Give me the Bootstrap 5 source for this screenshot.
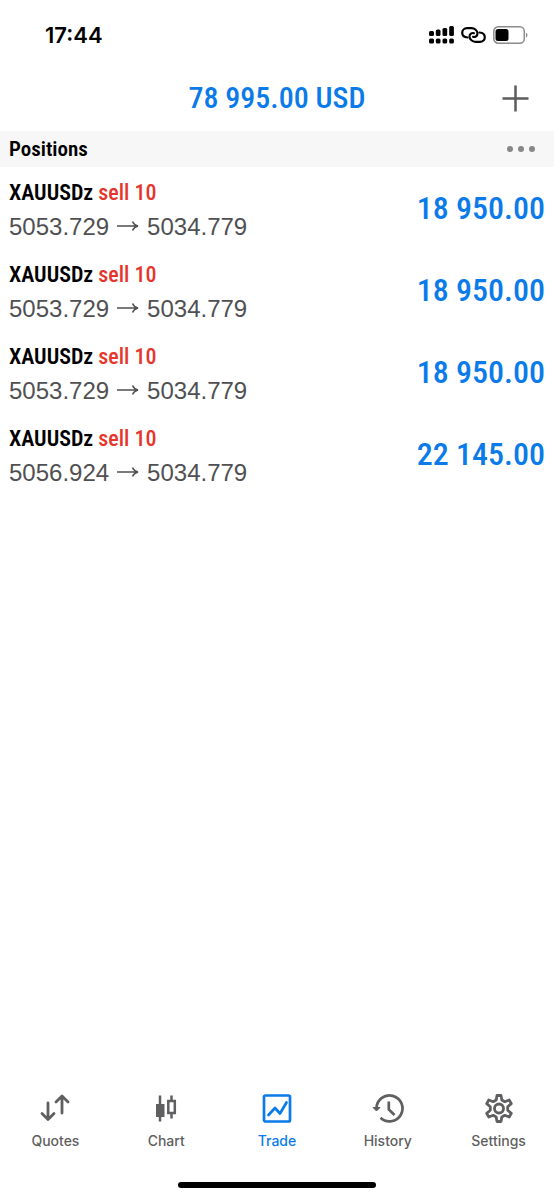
<!DOCTYPE html>
<html lang="en">
<head>
<meta charset="utf-8">
<meta name="viewport" content="width=device-width, initial-scale=1">
<title>Trade</title>
<link href="https://cdn.jsdelivr.net/npm/bootstrap@5.3.0/dist/css/bootstrap.min.css" rel="stylesheet">
<style>
  :root { --accent: #0b7bea; --ink-soft: #5f5f61; }
  body { font-family: "Liberation Sans", Arial, sans-serif; background: #fff; color: #000; }
  svg { display: block; }
  .condensed { font-family: "Roboto Condensed", "Liberation Sans Narrow", sans-serif; font-weight: 500; }
  .status-bar { height: 65px; padding: 5px 25px 0 45px; }
  .status-icons { gap: 7px; }
  .clock { font: 600 22px/28px Inter, sans-serif; }
  .account-bar { height: 66px; }
  .balance { font-size: 30px; line-height: 40px; color: var(--accent); }
  .plain-btn { background: none; border: 0; padding: 0; color: #5c5c5e; }
  .add-btn { right: 25px; }
  .section-bar { height: 36px; padding: 0 18px 0 9px; background: #f7f7f7; }
  .section-title { font-size: 21px; line-height: 28px; font-weight: 600; }
  .position-row { padding: 8px 9px 6px; }
  .symbol { font-size: 22px; line-height: 36px; font-weight: 600; }
  .sell { color: #e6352b; font-weight: 500; }
  .prices { font-size: 24px; line-height: 32px; color: #505053; }
  .profit { font-size: 32px; line-height: 40px; padding-bottom: 2px; color: var(--accent); }
  .tab-link { color: var(--ink-soft); font: 500 14px/20px Inter, sans-serif; }
  .tab-link.active { color: var(--accent); }
  .home-bar { width: 198px; height: 6px; margin: 31px auto 12px; background: #000; }
</style>
</head>
<body>
<div class="d-flex flex-column min-vh-100">
  <header>
    <div class="status-bar d-flex align-items-center justify-content-between">
      <time class="clock">17:44</time>
      <div class="status-icons d-flex align-items-center">
        <svg width="25" height="18" viewBox="0 0 25 18" role="img" aria-label="Signal">
          <rect x="0" y="5" width="5" height="5" rx="1.5"/><rect x="6.800" y="3.500" width="4.700" height="6.500" rx="1.500"/><rect x="13.500" y="2" width="4.700" height="8" rx="1.500"/><rect x="20.200" y="0" width="4.700" height="10" rx="1.500"/>
          <rect x="0" y="12.500" width="5" height="5" rx="1.500"/><rect x="6.800" y="12.500" width="4.700" height="5" rx="1.500"/><rect x="13.500" y="12.500" width="4.700" height="5" rx="1.500"/><rect x="20.200" y="12.500" width="4.700" height="5" rx="1.500"/>
        </svg>
        <svg width="25" height="16" viewBox="0 0 25 16" fill="none" stroke="#000" stroke-width="2.200" stroke-linecap="round" role="img" aria-label="Linked">
          <path d="M6.500 10.500C3 10.200 1.200 8 1.200 5.700C1.200 3 3.300 1.200 6 1.200H10.500C13.500 1.200 16.500 3.500 16.500 6.500C16.500 9 14 10.500 12 9.800"/>
          <path d="M18.500 5.500C22 5.800 23.800 8 23.800 10.300C23.800 13 21.700 14.800 19 14.800H14.500C11.500 14.800 8.500 12.500 8.500 9.500C8.500 7 11 5.500 13 6.200"/>
        </svg>
        <svg width="36" height="18" viewBox="0 0 36 18" role="img" aria-label="Battery">
          <rect x=".8" y=".8" width="30.500" height="16.400" rx="4.500" fill="none" stroke="#8b8b8b" stroke-width="1.500"/>
          <rect x="2.500" y="3" width="13" height="12" rx="2.500"/>
          <path d="M33 6.500 Q34.500 7 34.500 9 T33 11.500Z" fill="#8b8b8b"/>
        </svg>
      </div>
    </div>
    <div class="account-bar position-relative d-flex align-items-center justify-content-center">
      <h1 class="balance condensed m-0">78 995.00 USD</h1>
      <button type="button" class="plain-btn add-btn position-absolute" aria-label="New order">
        <svg width="27" height="27" viewBox="0 0 27 27" stroke="currentColor" stroke-width="2.500"><path d="M0.500 13.500H26.500M13.500 0.500V26.500"/></svg>
      </button>
    </div>
  </header>

  <main class="flex-grow-1">
    <div class="section-bar d-flex align-items-center justify-content-between">
      <h2 class="section-title condensed m-0">Positions</h2>
      <button type="button" class="plain-btn" aria-label="More">
        <svg width="30" height="8" viewBox="0 0 30 8" fill="#87878a"><circle cx="4" cy="4" r="3"/><circle cx="15" cy="4" r="3"/><circle cx="26" cy="4" r="3"/></svg>
      </button>
    </div>
    <ul class="list-unstyled m-0">
      <li class="position-row d-flex align-items-center justify-content-between">
        <div><div class="symbol condensed">XAUUSDz <span class="sell">sell 10</span></div>
          <div class="prices d-flex align-items-center gap-2"><span>5053.729</span><svg width="22" height="12" viewBox="0 0 22 12" fill="none" stroke="currentColor" stroke-width="1.500" aria-label="to"><path d="M0 5H21M15.500 0.500Q17 4 21 5Q17 6 15.500 9.500"/></svg><span>5034.779</span></div></div>
        <div class="profit condensed">18 950.00</div>
      </li>
      <li class="position-row d-flex align-items-center justify-content-between">
        <div><div class="symbol condensed">XAUUSDz <span class="sell">sell 10</span></div>
          <div class="prices d-flex align-items-center gap-2"><span>5053.729</span><svg width="22" height="12" viewBox="0 0 22 12" fill="none" stroke="currentColor" stroke-width="1.500" aria-label="to"><path d="M0 5H21M15.500 0.500Q17 4 21 5Q17 6 15.500 9.500"/></svg><span>5034.779</span></div></div>
        <div class="profit condensed">18 950.00</div>
      </li>
      <li class="position-row d-flex align-items-center justify-content-between">
        <div><div class="symbol condensed">XAUUSDz <span class="sell">sell 10</span></div>
          <div class="prices d-flex align-items-center gap-2"><span>5053.729</span><svg width="22" height="12" viewBox="0 0 22 12" fill="none" stroke="currentColor" stroke-width="1.500" aria-label="to"><path d="M0 5H21M15.500 0.500Q17 4 21 5Q17 6 15.500 9.500"/></svg><span>5034.779</span></div></div>
        <div class="profit condensed">18 950.00</div>
      </li>
      <li class="position-row d-flex align-items-center justify-content-between">
        <div><div class="symbol condensed">XAUUSDz <span class="sell">sell 10</span></div>
          <div class="prices d-flex align-items-center gap-2"><span>5056.924</span><svg width="22" height="12" viewBox="0 0 22 12" fill="none" stroke="currentColor" stroke-width="1.500" aria-label="to"><path d="M0 5H21M15.500 0.500Q17 4 21 5Q17 6 15.500 9.500"/></svg><span>5034.779</span></div></div>
        <div class="profit condensed">22 145.00</div>
      </li>
    </ul>
  </main>

  <footer class="sticky-bottom bg-white">
    <nav class="row row-cols-5 g-0 text-center" aria-label="Main">
      <a href="#quotes" class="tab-link col text-decoration-none d-flex flex-column align-items-center gap-2">
        <svg width="30" height="30" viewBox="0 0 30 30" fill="none" stroke="currentColor" stroke-width="2.800" stroke-linecap="round" stroke-linejoin="round"><path d="M8 10V26M2 20.500L8 26.500L14 20.500M22 20V4M16 9L22 3L28 9"/></svg>
        Quotes</a>
      <a href="#chart" class="tab-link col text-decoration-none d-flex flex-column align-items-center gap-2">
        <svg width="30" height="30" viewBox="0 0 30 30" fill="none" stroke="currentColor" stroke-width="2.500"><path d="M9 2.500V28.500M20.500 2.500V7.500M20.500 20V25.500"/><rect x="5" y="11" width="8.500" height="13" fill="currentColor" stroke="none"/><rect x="17.300" y="8" width="6.500" height="12"/></svg>
        Chart</a>
      <a href="#trade" class="tab-link active col text-decoration-none d-flex flex-column align-items-center gap-2" aria-current="page">
        <svg width="30" height="30" viewBox="0 0 30 30" fill="none" stroke="currentColor" stroke-width="2.700" stroke-linejoin="round"><rect x="2" y="2.500" width="26" height="26" rx="1.500"/><path d="M6.500 22L13 15L18 20.500L24.500 9.500" stroke-linecap="round"/></svg>
        Trade</a>
      <a href="#history" class="tab-link col text-decoration-none d-flex flex-column align-items-center gap-2">
        <svg width="32" height="30" viewBox="0 0 32 30" fill="none" stroke="currentColor" stroke-width="2.700"><path d="M4.500 15.500A13 13 0 1 1 8.500 24.800"/><path d="M16.800 8.500V16.500L22.500 22"/><path d="M1 14.500H8L4.500 18Z" fill="currentColor" stroke-width="1" stroke-linejoin="round"/></svg>
        History</a>
      <a href="#settings" class="tab-link col text-decoration-none d-flex flex-column align-items-center gap-2">
        <svg width="30" height="30" viewBox="0 0 30 30" fill="none" stroke="currentColor" stroke-width="2.800" stroke-linejoin="round"><circle cx="15" cy="15.500" r="4.500"/><path d="M13 2.500H17L17.800 7L20.800 8.700L25.200 7L27.300 10.600L23.700 13.700V17.300L27.300 20.400L25.200 24L20.800 22.300L17.800 24L17 28.500H13L12.200 24L9.200 22.300L4.800 24L2.700 20.400L6.300 17.300V13.700L2.700 10.600L4.800 7L9.200 8.700L12.200 7Z"/></svg>
        Settings</a>
    </nav>
    <div class="home-bar rounded-pill"></div>
  </footer>
</div>
<script src="https://cdn.jsdelivr.net/npm/bootstrap@5.3.0/dist/js/bootstrap.bundle.min.js"></script>
</body>
</html>
